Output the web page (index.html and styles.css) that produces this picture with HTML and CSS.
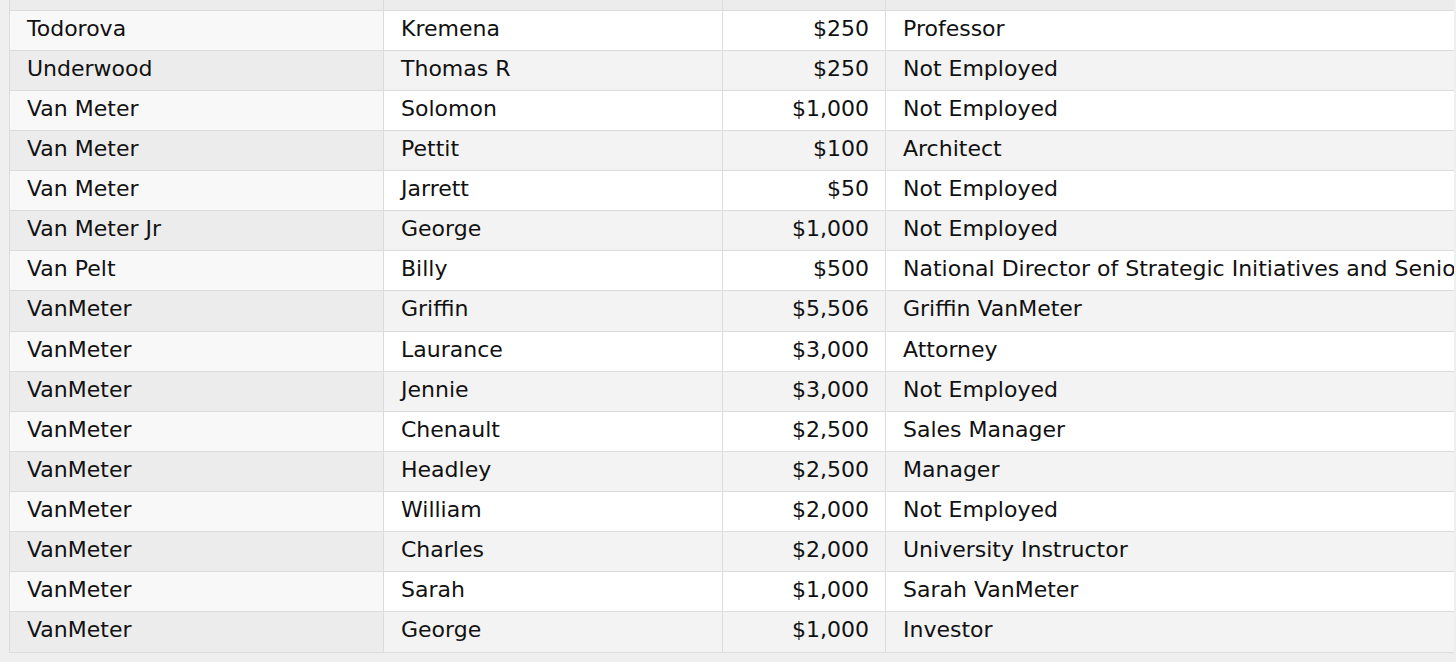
FILE: index.html
```html
<!DOCTYPE html>
<html>
<head>
<meta charset="utf-8">
<link rel="stylesheet" href="styles.css">
</head>
<body>
<div class="viewport">
  <table class="grid">
    <colgroup>
      <col class="c1"><col class="c2"><col class="c3"><col class="c4">
    </colgroup>
    <thead>
      <tr class="head"><th></th><th></th><th></th><th></th></tr>
    </thead>
    <tbody>
      <tr><td>Todorova</td><td>Kremena</td><td class="num">$250</td><td>Professor</td></tr>
      <tr><td>Underwood</td><td>Thomas R</td><td class="num">$250</td><td>Not Employed</td></tr>
      <tr><td>Van Meter</td><td>Solomon</td><td class="num">$1,000</td><td>Not Employed</td></tr>
      <tr><td>Van Meter</td><td>Pettit</td><td class="num">$100</td><td>Architect</td></tr>
      <tr><td>Van Meter</td><td>Jarrett</td><td class="num">$50</td><td>Not Employed</td></tr>
      <tr><td>Van Meter Jr</td><td>George</td><td class="num">$1,000</td><td>Not Employed</td></tr>
      <tr><td>Van Pelt</td><td>Billy</td><td class="num">$500</td><td>National Director of Strategic Initiatives and Senior Advisor</td></tr>
      <tr><td>VanMeter</td><td>Griffin</td><td class="num">$5,506</td><td>Griffin VanMeter</td></tr>
      <tr><td>VanMeter</td><td>Laurance</td><td class="num">$3,000</td><td>Attorney</td></tr>
      <tr><td>VanMeter</td><td>Jennie</td><td class="num">$3,000</td><td>Not Employed</td></tr>
      <tr><td>VanMeter</td><td>Chenault</td><td class="num">$2,500</td><td>Sales Manager</td></tr>
      <tr><td>VanMeter</td><td>Headley</td><td class="num">$2,500</td><td>Manager</td></tr>
      <tr><td>VanMeter</td><td>William</td><td class="num">$2,000</td><td>Not Employed</td></tr>
      <tr><td>VanMeter</td><td>Charles</td><td class="num">$2,000</td><td>University Instructor</td></tr>
      <tr><td>VanMeter</td><td>Sarah</td><td class="num">$1,000</td><td>Sarah VanMeter</td></tr>
      <tr><td>VanMeter</td><td>George</td><td class="num">$1,000</td><td>Investor</td></tr>
    </tbody>
  </table>
</div>
</body>
</html>
```
FILE: styles.css
```css
html, body {
  margin: 0;
  padding: 0;
  background: #efefef;
  overflow: hidden;
}
.viewport {
  height: 662px;
  margin-left: 9px;
  width: 1445px;
  overflow: hidden;
}
.grid {
  border-collapse: collapse;
  table-layout: fixed;
  width: 1576px;
  font-family: "DejaVu Sans", Verdana, sans-serif;
  font-size: 22px;
  color: #111;
  white-space: nowrap;
}
.c1 { width: 374px; }
.c2 { width: 339px; }
.c3 { width: 163px; }
.c4 { width: 700px; }
.grid th, .grid td {
  height: 40.125px;
  box-sizing: border-box;
  border: 1px solid #dcdcdc;
  padding: 0 16px 3px 17px;
  text-align: left;
  overflow: hidden;
  line-height: 26px;
}
.grid .head th {
  height: 10px;
  padding: 0;
  background: #ececec;
  border-top: 0;
}
.grid td.num {
  text-align: right;
  padding-right: 16px;
}
.grid tbody tr:nth-child(odd) td { background: #fff; }
.grid tbody tr:nth-child(even) td { background: #f3f3f3; }
.grid tbody tr:nth-child(odd) td:first-child { background: #f8f8f8; }
.grid tbody tr:nth-child(even) td:first-child { background: #ececec; }
```
